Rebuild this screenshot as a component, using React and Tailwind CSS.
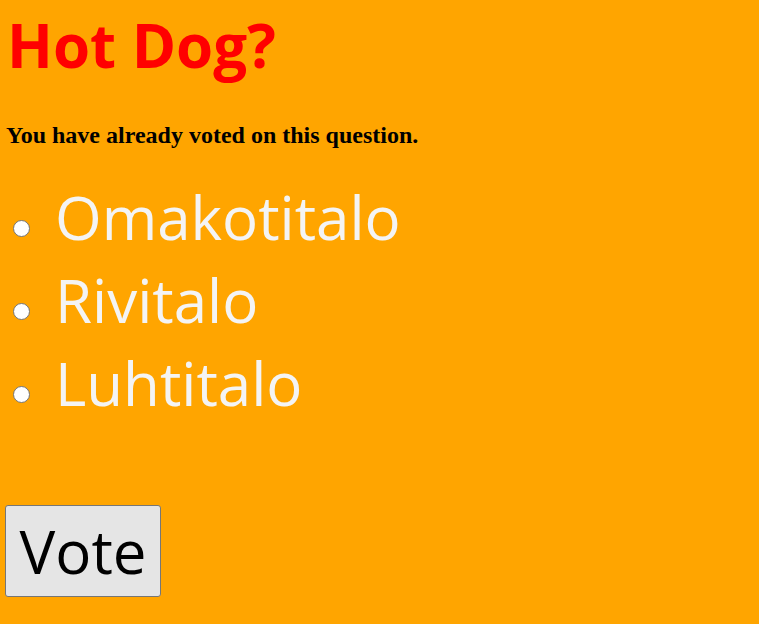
export default function App() {
  const comic = "font-['Comic_Sans_MS','Open_Sans',sans-serif]";
  const options = ["Omakotitalo", "Rivitalo", "Luhtitalo"];
  return (
    <div className="min-h-screen w-full bg-[#ffa500] pl-[5px]">
      <h1 className={`${comic} text-[60px] font-bold leading-[60px] text-[#ff0000] pt-[15px] pl-[2px]`}>Hot Dog?</h1>
      <p className="font-['Liberation_Serif',serif] text-[24px] font-bold leading-[24px] text-black mt-[48px] pl-[1px]">
        You have already voted on this question.
      </p>
      <div className="mt-[29px] flex flex-col">
        {options.map((o) => (
          <label key={o} className="flex h-[83px] items-center">
            <input
              type="radio"
              name="v"
              className="ml-[8px] mr-[25px] mt-[22px] h-[17px] w-[17px] shrink-0 appearance-none rounded-full border border-[#767676] bg-white"
            />
            <span className={`${comic} text-[60px] leading-[83px] text-[#f4f4f4]`}>{o}</span>
          </label>
        ))}
      </div>
      <button className={`${comic} mt-[80px] flex h-[92px] w-[156px] items-center justify-center rounded-[3px] border border-[#767676] bg-[#e5e5e5] text-[60px] text-black`}>
        Vote
      </button>
    </div>
  );
}
